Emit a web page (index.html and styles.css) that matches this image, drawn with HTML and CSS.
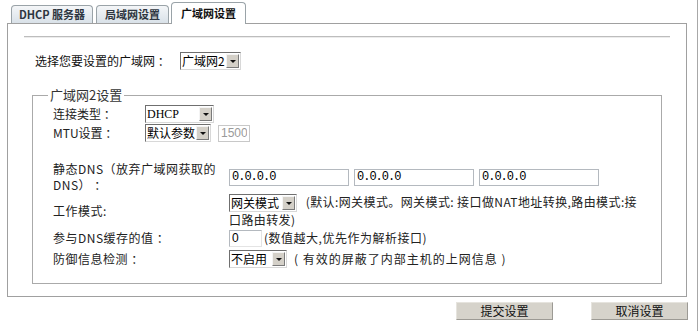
FILE: index.html
```
<!DOCTYPE html>
<html lang="zh-CN">
<head>
    <meta charset="UTF-8">
    <title>广域网设置</title>
    <link rel="stylesheet" href="styles.css">
</head>
<body>
<div class="page">
    <div class="tabs">
        <div class="tab tab-dhcp">DHCP 服务器</div>
        <div class="tab tab-lan">局域网设置</div>
        <div class="tab tab-wan active">广域网设置</div>
    </div>

    <div class="panel">
        <div class="sep"></div>

        <div class="choose">
            <span class="choose-label">选择您要设置的广域网 ：</span>
            <span class="select w-wan">
                <select><option>广域网2</option></select>
                <span class="arrow"></span>
            </span>
        </div>

        <fieldset class="group">
            <legend>广域网2设置</legend>

            <div class="rows rows-top">
                <div class="label">连接类型 ：</div>
                <div class="ctl">
                    <span class="select w-type">
                        <select class="latin"><option>DHCP</option></select>
                        <span class="arrow"></span>
                    </span>
                </div>

                <div class="label">MTU设置 ：</div>
                <div class="ctl">
                    <span class="select w-mtu">
                        <select><option>默认参数</option></select>
                        <span class="arrow"></span>
                    </span>
                    <input type="text" class="text mtu" value="1500" disabled>
                </div>
            </div>

            <div class="rows rows-bottom">
                <div class="label spaced two-line">静态DNS（放弃广域网获取的<br>DNS） ：</div>
                <div class="ctl dns">
                    <input type="text" class="text ip" value="0.0.0.0">
                    <input type="text" class="text ip" value="0.0.0.0">
                    <input type="text" class="text ip" value="0.0.0.0">
                </div>

                <div class="label spaced">工作模式:</div>
                <div class="ctl mode">
                    <span class="select w-mode">
                        <select><option>网关模式</option></select>
                        <span class="arrow"></span>
                    </span>
                    <span class="note">(默认:网关模式。网关模式: 接口做NAT地址转换,路由模式:接<br>口路由转发)</span>
                </div>

                <div class="label spaced">参与DNS缓存的值 ：</div>
                <div class="ctl">
                    <input type="text" class="text cache" value="0">
                    <span class="note tight">(数值越大,优先作为解析接口)</span>
                </div>

                <div class="label spaced">防御信息检测 ：</div>
                <div class="ctl">
                    <span class="select w-off">
                        <select><option>不启用</option></select>
                        <span class="arrow"></span>
                    </span>
                    <span class="note">( 有效的屏蔽了内部主机的上网信息 )</span>
                </div>
            </div>
        </fieldset>
    </div>

    <div class="actions">
        <button type="button">提交设置</button>
        <button type="button">取消设置</button>
    </div>
</div>
</body>
</html>
```

FILE: styles.css
```
body {
  margin: 0;
  padding: 0;
  background-color: #fff;
  font-family: "Noto Sans CJK SC", "DejaVu Sans", sans-serif;
  font-size: 12px;
  line-height: 14px;
  color: #111;
}

.page {
  width: 697px;
  height: 331px;
  border-right: 1px solid #a8a8a8;
}

/* tabs */
.tabs {
  display: flex;
  align-items: flex-end;
  height: 23px;
  padding-left: 11px;
  gap: 3px;
}

.tab {
  height: 17px;
  border: 1px solid #9aa3a8;
  border-bottom: none;
  border-radius: 4px 4px 0 0;
  background: linear-gradient(#f4f6f8, #d9e1e8);
  color: #2e3640;
  font-size: 11px;
  font-weight: bold;
  line-height: 17px;
  text-align: center;
  white-space: nowrap;
}

.tab-dhcp { width: 80px; }
.tab-lan { width: 71px; }

.tab.active {
  width: 73px;
  height: 21px;
  margin-bottom: -1px;
  margin-left: -1px;
  background: #fff;
  color: #111;
  line-height: 21px;
  position: relative;
  z-index: 1;
}

/* panel */
.panel {
  margin-left: 7px;
  width: 680px;
  height: 274px;
  border: 1px solid #a0a0a0;
  padding-top: 12px;
  box-sizing: border-box;
}

.sep {
  margin: 0 16px 0 16px;
  height: 0;
  border-top: 1px solid #bdbdbd;
  border-bottom: 1px solid #ececec;
}

.choose {
  display: flex;
  align-items: center;
  margin-top: 14px;
  padding-left: 27px;
  height: 18px;
}

.choose-label {
  width: 145px;
  white-space: nowrap;
}

/* select boxes in the old windows look */
.select {
  position: relative;
  display: inline-block;
  vertical-align: middle;
  height: 18px;
}

.select select {
  appearance: none;
  -webkit-appearance: none;
  width: 100%;
  height: 18px;
  margin: 0;
  padding: 0 14px 0 1px;
  border: 1px solid;
  border-color: #6f6f6f #d8d8d8 #d8d8d8 #6f6f6f;
  border-radius: 0;
  background: #fff;
  font-family: inherit;
  font-size: 12px;
  line-height: 16px;
  color: #000;
}

.select select.latin {
  font-family: "Liberation Serif", serif;
}

.select .arrow {
  position: absolute;
  top: 2px;
  right: 2px;
  width: 11px;
  height: 12px;
  background: #d4d0c8;
  border: 1px solid;
  border-color: #f4f4f4 #7a7a7a #7a7a7a #f4f4f4;
}

.select .arrow::after {
  content: "";
  position: absolute;
  left: 3px;
  top: 5px;
  border-left: 3px solid transparent;
  border-right: 3px solid transparent;
  border-top: 3px solid #111;
}

.w-wan { width: 61px; }
.w-type { width: 69px; }
.w-mtu { width: 66px; }
.w-mode { width: 68px; }
.w-off { width: 58px; }

/* fieldset */
.group {
  margin: 17px 24px 0 24px;
  padding: 2px 20px 13px 20px;
  border: 1px solid #aaa;
  min-width: 0;
}

.group legend {
  margin-left: -5px;
  padding: 0 2px;
  font-size: 13px;
  line-height: 16px;
  color: #333;
}

.rows {
  display: grid;
  align-items: center;
}

.rows-top {
  grid-template-columns: 92px auto;
  grid-template-rows: 18px 18px;
  row-gap: 1px;
}

.rows-bottom {
  grid-template-columns: 176px auto;
  grid-template-rows: 32px 35px 20px 22px;
  margin-top: 19px;
}

.label {
  color: #222;
  white-space: nowrap;
}

.label.spaced {
  letter-spacing: 0.5px;
}

.label.two-line {
  line-height: 16px;
}

.ctl {
  display: flex;
  align-items: center;
  gap: 7px;
}

.ctl.dns {
  gap: 5px;
}

.ctl.mode {
  display: block;
  line-height: 16px;
  padding-top: 1px;
  white-space: nowrap;
}

.ctl.mode .note {
  margin-left: 6px;
  letter-spacing: 0.4px;
}

.note {
  letter-spacing: 1px;
  color: #222;
  white-space: nowrap;
}

.note.tight {
  margin-left: -5px;
  letter-spacing: 0.5px;
}

input.text {
  box-sizing: border-box;
  height: 17px;
  margin: 0;
  padding: 0 2px;
  border: 1px solid #b4b9bf;
  font-family: "Liberation Mono", monospace;
  font-size: 12px;
  color: #000;
  background: #fff;
}

input.ip {
  width: 120px;
  letter-spacing: -1px;
}

input.mtu {
  width: 32px;
  color: #9a9a9a;
  border-color: #c8c8c8;
  font-family: "Liberation Sans", sans-serif;
}

input.cache {
  width: 33px;
  font-family: "Liberation Sans", sans-serif;
  border-color: #b4b9bf #e4e4e4 #e4e4e4 #b4b9bf;
}

/* bottom buttons */
.actions {
  display: flex;
  justify-content: flex-end;
  gap: 38px;
  margin-top: 5px;
  padding-right: 9px;
}

.actions button {
  width: 97px;
  height: 18px;
  padding: 0;
  border: 1px solid;
  border-color: #e6e4de #9c9a94 #9c9a94 #e6e4de;
  border-radius: 0;
  background-color: #d6d3cb;
  font-family: inherit;
  font-size: 12px;
  line-height: 14px;
  color: #111;
}
```
